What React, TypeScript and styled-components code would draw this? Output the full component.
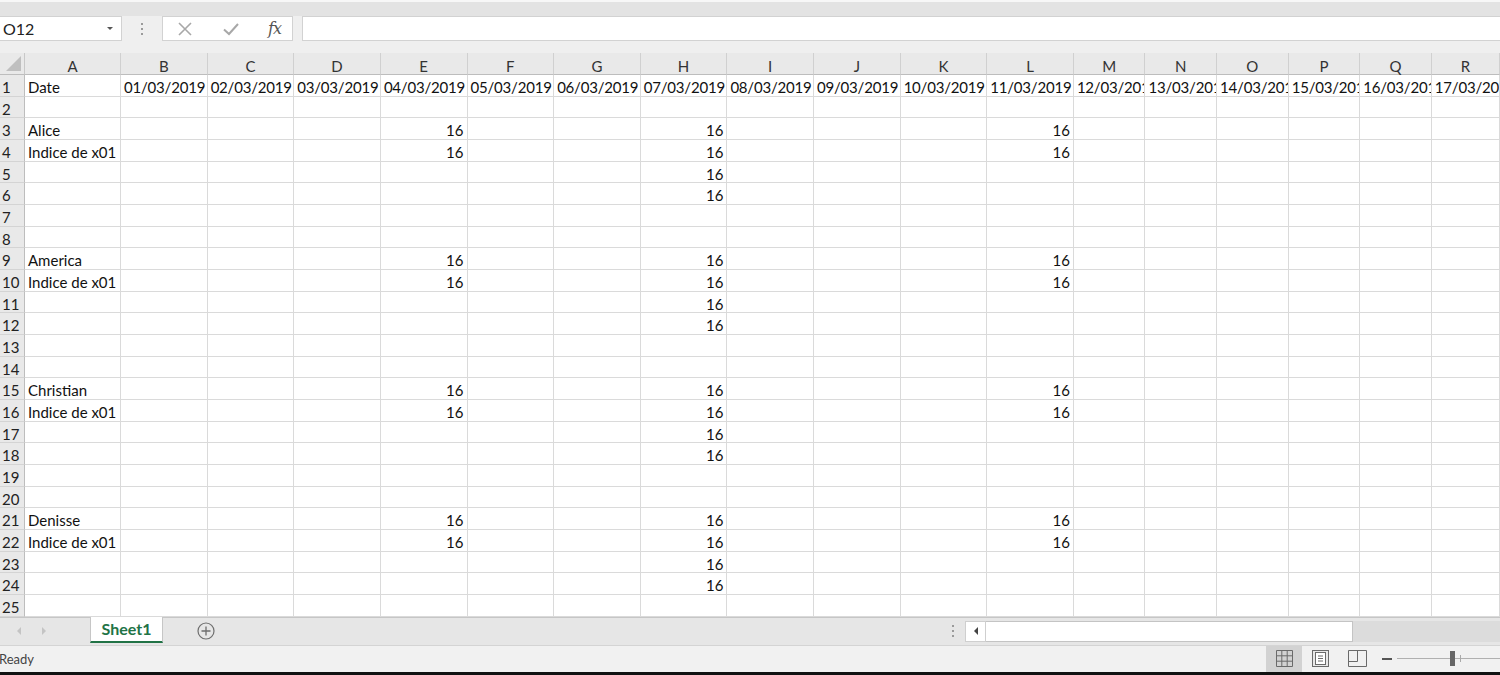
import React from "react";
import styled, { createGlobalStyle } from "styled-components";

const GlobalStyle = createGlobalStyle`
  html, body { margin: 0; padding: 0; width: 1500px; height: 675px; overflow: hidden; background: #efefef; }
  body { font-family: Lato, "Liberation Sans", sans-serif; }
  #root { width: 1500px; height: 675px; }
`;

const Page = styled.div`
  display: flex;
  flex-direction: column;
  width: 1500px;
  height: 675px;
  overflow: hidden;
  background: #efefef;
`;

const TopBand = styled.div`
  height: 14px;
  border-top: 2px solid #f7f7f7;
  background: #e3e3e3;
`;

const FormulaBar = styled.div`
  display: flex;
  align-items: stretch;
  height: 25px;
  padding-bottom: 12px;
  background: #efefef;
`;

const NameBox = styled.div`
  width: 122px;
  box-sizing: border-box;
  border: 1px solid #d2d2d2;
  border-left: none;
  background: #fff;
  display: flex;
  align-items: center;
  justify-content: space-between;
  padding: 0 8px 0 3px;
  font-size: 16px;
  color: #222;
`;

const DropArrow = styled.span`
  width: 0;
  height: 0;
  border-left: 3px solid transparent;
  border-right: 3px solid transparent;
  border-top: 3px solid #555;
`;

const Separator = styled.div`
  width: 40px;
  display: flex;
  flex-direction: column;
  align-items: center;
  justify-content: center;
  gap: 3px;
`;

const Dot = styled.span`
  width: 2px;
  height: 2px;
  background: #9a9a9a;
`;

const FxBox = styled.div`
  width: 131px;
  box-sizing: border-box;
  border: 1px solid #d2d2d2;
  background: #fff;
  display: flex;
  align-items: center;
  justify-content: space-between;
  padding: 0 11px 0 14px;
`;

const FxText = styled.span`
  font-family: "DejaVu Serif", "Liberation Serif", serif;
  font-style: italic;
  font-size: 16px;
  color: #555;
  letter-spacing: -1px;
`;

const FormulaInput = styled.div`
  flex: 1;
  margin-left: 9px;
  box-sizing: border-box;
  border: 1px solid #d2d2d2;
  border-right: none;
  background: #fff;
`;

const Sheet = styled.div`
  display: grid;
  grid-template-columns: 25px 96px repeat(11, 86.64px) repeat(5, 71.6px) 68px;
  grid-template-rows: 22px repeat(25, 21.68px);
  background: #fff;
  font-size: 15px;
`;

const Corner = styled.div`
  position: relative;
  background: #e9e9e9;
  box-sizing: border-box;
  border-right: 1px solid #c8c8c8;
  border-bottom: 1px solid #bdbdbd;
`;

const CornerTri = styled.span`
  position: absolute;
  right: 3px;
  bottom: 3px;
  width: 0;
  height: 0;
  border-left: 15px solid transparent;
  border-bottom: 15px solid #bfbfbf;
`;

const ColHead = styled.div`
  background: #e9e9e9;
  box-sizing: border-box;
  border-right: 1px solid #d0d0d0;
  border-bottom: 1px solid #bdbdbd;
  display: flex;
  align-items: center;
  justify-content: center;
  color: #333;
  padding-top: 4px;
`;

const RowHead = styled.div`
  background: #e9e9e9;
  box-sizing: border-box;
  border-right: 1px solid #bdbdbd;
  border-bottom: 1px solid #d4d4d4;
  display: flex;
  align-items: center;
  padding: 3px 0 0 2px;
  color: #222;
`;

const Cell = styled.div<{ $right?: boolean; $date?: boolean }>`
  box-sizing: border-box;
  border-right: 1px solid #dadada;
  border-bottom: 1px solid #dadada;
  display: flex;
  align-items: center;
  justify-content: ${(p) => (p.$right ? "flex-end" : "flex-start")};
  padding: 3px 3px 0 3px;
  white-space: nowrap;
  overflow: hidden;
  color: #111;
  letter-spacing: ${(p) => (p.$date ? "-0.2px" : "0")};
`;

const TabBar = styled.div`
  height: 28px;
  display: flex;
  align-items: stretch;
  background: #e6e6e6;
  border-top: 1px solid #c6c6c6;
  box-sizing: border-box;
`;

const NavArea = styled.div`
  width: 90px;
  display: flex;
  align-items: center;
  padding-left: 17px;
  gap: 21px;
  box-sizing: border-box;
`;

const NavArrow = styled.span<{ $dir: "left" | "right"; $dark?: boolean }>`
  width: 0;
  height: 0;
  border-top: 4px solid transparent;
  border-bottom: 4px solid transparent;
  ${(p) =>
    p.$dir === "left"
      ? `border-right: 4px solid ${p.$dark ? "#444" : "#c4c4c4"};`
      : `border-left: 4px solid ${p.$dark ? "#444" : "#c4c4c4"};`}
`;

const SheetTab = styled.div`
  width: 73px;
  margin-top: -1px;
  margin-bottom: 2px;
  box-sizing: border-box;
  background: #fff;
  border-left: 1px solid #c6c6c6;
  border-right: 1px solid #c6c6c6;
  border-bottom: 2px solid #217346;
  display: flex;
  align-items: center;
  justify-content: center;
  font-weight: 700;
  font-size: 16px;
  color: #217346;
`;

const AddButton = styled.div`
  width: 86px;
  display: flex;
  align-items: center;
  justify-content: center;
`;

const TabSpacer = styled.div`
  flex: 1;
`;

const ScrollDots = styled.div`
  width: 20px;
  display: flex;
  flex-direction: column;
  align-items: center;
  justify-content: center;
  gap: 3px;
  margin-right: 2px;
`;

const ScrollArea = styled.div`
  width: 535px;
  display: flex;
  align-items: center;
  padding: 3px 0;
  box-sizing: border-box;
`;

const ScrollBtn = styled.div`
  width: 21px;
  height: 100%;
  box-sizing: border-box;
  background: #fff;
  border: 1px solid #cfcfcf;
  display: flex;
  align-items: center;
  justify-content: center;
`;

const ScrollThumb = styled.div`
  width: 367px;
  height: 100%;
  box-sizing: border-box;
  background: #fff;
  border: 1px solid #c4c4c4;
  border-left: none;
`;

const ScrollTrack = styled.div`
  flex: 1;
  height: 100%;
  background: #dcdcdc;
`;

const StatusBar = styled.div`
  height: 27px;
  display: flex;
  align-items: stretch;
  background: #f1f1f1;
  border-top: 1px solid #d4d4d4;
  box-sizing: border-box;
  font-size: 13px;
  color: #444;
`;

const StatusText = styled.div`
  flex: 1;
  display: flex;
  align-items: center;
  margin-left: -1px;
`;

const ViewButton = styled.div<{ $active?: boolean }>`
  width: ${(p) => (p.$active ? "36px" : "37px")};
  display: flex;
  align-items: center;
  justify-content: center;
  background: ${(p) => (p.$active ? "#d2d2d2" : "transparent")};
`;

const ZoomArea = styled.div`
  width: 124px;
  display: flex;
  align-items: center;
  padding-left: 6px;
  box-sizing: border-box;
  gap: 5px;
`;

const ZoomTrack = styled.div`
  position: relative;
  flex: 1;
  height: 1px;
  background: #b0b0b0;
`;

const ZoomThumb = styled.span`
  position: absolute;
  left: 53px;
  top: -7px;
  width: 5px;
  height: 15px;
  background: #666;
`;

const ZoomTick = styled.span`
  position: absolute;
  left: 63px;
  top: -3px;
  width: 1px;
  height: 7px;
  background: #aaa;
`;

const BottomEdge = styled.div`
  height: 3px;
  background: #111;
`;

const COLS = ["A", "B", "C", "D", "E", "F", "G", "H", "I", "J", "K", "L", "M", "N", "O", "P", "Q", "R"];

const NAMES: Record<number, string> = {
  1: "Date",
  3: "Alice",
  4: "Indice de x01",
  9: "America",
  10: "Indice de x01",
  15: "Christian",
  16: "Indice de x01",
  21: "Denisse",
  22: "Indice de x01",
};

const FULL_ROWS = [3, 4, 9, 10, 15, 16, 21, 22];
const H_ROWS = [5, 6, 11, 12, 17, 18, 23, 24];

function cellValue(row: number, col: string): { text: string; right: boolean; date: boolean } {
  if (col === "A") return { text: NAMES[row] ?? "", right: false, date: false };
  if (row === 1) {
    const day = COLS.indexOf(col);
    return { text: `${String(day).padStart(2, "0")}/03/2019`, right: false, date: true };
  }
  if (FULL_ROWS.includes(row) && (col === "E" || col === "H" || col === "L"))
    return { text: "16", right: true, date: false };
  if (H_ROWS.includes(row) && col === "H") return { text: "16", right: true, date: false };
  return { text: "", right: false, date: false };
}

const XIcon = () => (
  <svg width="16" height="16" viewBox="0 0 16 16">
    <path d="M2 2 L14 14 M14 2 L2 14" stroke="#a8a8a8" strokeWidth="1.6" fill="none" />
  </svg>
);

const CheckIcon = () => (
  <svg width="18" height="16" viewBox="0 0 18 16">
    <path d="M2 8.5 L7 13 L16 3" stroke="#a8a8a8" strokeWidth="2" fill="none" />
  </svg>
);

const PlusCircle = () => (
  <svg width="18" height="18" viewBox="0 0 18 18">
    <circle cx="9" cy="9" r="8" stroke="#6e6e6e" strokeWidth="1.2" fill="none" />
    <path d="M9 4.5 V13.5 M4.5 9 H13.5" stroke="#6e6e6e" strokeWidth="1.3" />
  </svg>
);

const GridIcon = () => (
  <svg width="17" height="17" viewBox="0 0 17 17">
    <path
      d="M0.5 0.5 H16.5 V16.5 H0.5 Z M0.5 5.8 H16.5 M0.5 11.2 H16.5 M5.8 0.5 V16.5 M11.2 0.5 V16.5"
      stroke="#6a6a6a"
      strokeWidth="1"
      fill="none"
    />
  </svg>
);

const PageIcon = () => (
  <svg width="17" height="17" viewBox="0 0 17 17">
    <rect x="0.5" y="0.5" width="16" height="16" stroke="#6a6a6a" fill="#e8e8e8" />
    <rect x="3.5" y="2.5" width="10" height="12" stroke="#6a6a6a" fill="#fff" />
    <path d="M6 6 H11 M6 8.5 H11 M6 11 H11" stroke="#6a6a6a" />
  </svg>
);

const BreakIcon = () => (
  <svg width="19" height="17" viewBox="0 0 19 17">
    <path d="M0.5 0.5 H18.5 V16.5 H0.5 Z M9.5 0.5 V11.5 H0.5" stroke="#6a6a6a" fill="none" />
  </svg>
);

export default function App() {
  const rows = Array.from({ length: 25 }, (_, i) => i + 1);
  return (
    <>
      <GlobalStyle />
      <Page>
        <TopBand />
        <FormulaBar>
          <NameBox>
            <span>O12</span>
            <DropArrow />
          </NameBox>
          <Separator>
            <Dot />
            <Dot />
            <Dot />
          </Separator>
          <FxBox>
            <XIcon />
            <CheckIcon />
            <FxText>fx</FxText>
          </FxBox>
          <FormulaInput />
        </FormulaBar>
        <Sheet>
          <Corner>
            <CornerTri />
          </Corner>
          {COLS.map((c) => (
            <ColHead key={c}>{c}</ColHead>
          ))}
          {rows.map((r) => (
            <React.Fragment key={r}>
              <RowHead>{r}</RowHead>
              {COLS.map((c) => {
                const v = cellValue(r, c);
                return (
                  <Cell key={c} $right={v.right} $date={v.date}>
                    {v.text}
                  </Cell>
                );
              })}
            </React.Fragment>
          ))}
        </Sheet>
        <TabBar>
          <NavArea>
            <NavArrow $dir="left" />
            <NavArrow $dir="right" />
          </NavArea>
          <SheetTab>Sheet1</SheetTab>
          <AddButton>
            <PlusCircle />
          </AddButton>
          <TabSpacer />
          <ScrollDots>
            <Dot />
            <Dot />
            <Dot />
          </ScrollDots>
          <ScrollArea>
            <ScrollBtn>
              <NavArrow $dir="left" $dark />
            </ScrollBtn>
            <ScrollThumb />
            <ScrollTrack />
          </ScrollArea>
        </TabBar>
        <StatusBar>
          <StatusText>Ready</StatusText>
          <ViewButton $active>
            <GridIcon />
          </ViewButton>
          <ViewButton>
            <PageIcon />
          </ViewButton>
          <ViewButton>
            <BreakIcon />
          </ViewButton>
          <ZoomArea>
            <svg width="10" height="4" viewBox="0 0 10 4">
              <rect x="0" y="1" width="10" height="2" fill="#555" />
            </svg>
            <ZoomTrack>
              <ZoomThumb />
              <ZoomTick />
            </ZoomTrack>
          </ZoomArea>
        </StatusBar>
        <BottomEdge />
      </Page>
    </>
  );
}
